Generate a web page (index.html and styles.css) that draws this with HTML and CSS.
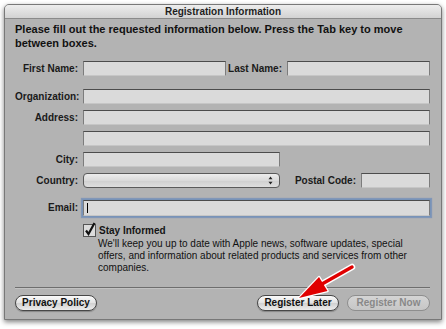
FILE: index.html
```html
<!DOCTYPE html>
<html lang="en">

<head>
  <meta charset="UTF-8">
  <title>Registration Information</title>
  <link rel="stylesheet" href="styles.css">
</head>

<body>
  <div class="window">
    <div class="titlebar">Registration Information</div>
    <div class="content">
      <p class="intro">Please fill out the requested information below. Press the Tab key to move<br>between boxes.</p>

      <div class="form">
        <div class="row">
          <span class="lbl">First Name:</span>
          <span class="field half"></span>
          <span class="lbl lbl-mid">Last Name:</span>
          <span class="field half"></span>
        </div>
        <div class="row row-org">
          <span class="lbl">Organization:</span>
          <span class="field full"></span>
        </div>
        <div class="row">
          <span class="lbl">Address:</span>
          <span class="field full"></span>
        </div>
        <div class="row">
          <span class="lbl"></span>
          <span class="field full"></span>
        </div>
        <div class="row">
          <span class="lbl">City:</span>
          <span class="field city"></span>
        </div>
        <div class="row">
          <span class="lbl">Country:</span>
          <span class="popup">
            <svg width="5" height="9" viewBox="0 0 5 9">
              <path d="M2.5 0.5 L4.5 3.2 L0.5 3.2 Z M2.5 8.5 L4.5 5.8 L0.5 5.8 Z" fill="#222"/>
            </svg>
          </span>
          <span class="lbl lbl-postal">Postal Code:</span>
          <span class="field postal"></span>
        </div>
        <div class="row row-email">
          <span class="lbl">Email:</span>
          <span class="field full focused"><span class="caret"></span></span>
        </div>
      </div>

      <div class="optin">
        <svg class="check" width="14" height="15" viewBox="0 0 14 15">
          <rect x="0.5" y="2.5" width="12" height="12" fill="#dcdcdc" stroke="#555"/>
          <path d="M3 8.5 L5.5 12 L11.5 1" fill="none" stroke="#111" stroke-width="2.2"/>
        </svg>
        <span class="optin-title">Stay Informed</span>
      </div>
      <p class="optin-text">We'll keep you up to date with Apple news, software updates, special<br>offers, and information about related products and services from other<br>companies.</p>

      <div class="separator"></div>

      <div class="buttons">
        <span class="btn">Privacy Policy</span>
        <div class="btn-group">
          <span class="btn">Register Later</span>
          <span class="btn btn-off">Register Now</span>
        </div>
      </div>
    </div>
  </div>

  <svg class="arrow" width="446" height="329" viewBox="0 0 446 329">
    <g stroke="#fff" stroke-width="2.5" stroke-linejoin="round">
      <path d="M352 267 L322 284" stroke-width="6.5" stroke-linecap="round"/>
      <path d="M299 298 L327.5 291 L319 277 Z" fill="#fff"/>
    </g>
    <path d="M352 267 L322 284" stroke="#e00000" stroke-width="3.5" stroke-linecap="round"/>
    <path d="M299 298 L327.5 291 L319 277 Z" fill="#e00000"/>
  </svg>
</body>

</html>
```

FILE: styles.css
```css
* {
  box-sizing: border-box;
}
body {
  margin: 0;
  width: 446px;
  height: 329px;
  position: relative;
  overflow: hidden;
  background: #fff;
  font-family: "Liberation Sans", Arial, sans-serif;
  color: #151515;
}
.window {
  margin: 4px 0 0 4px;
  width: 438px;
  height: 316px;
  background: #b3b3b3;
  border: 1px solid #787878;
  border-radius: 5px 5px 0 0;
  box-shadow: 0 2px 5px rgba(0, 0, 0, 0.5);
}
.titlebar {
  height: 14px;
  line-height: 13px;
  text-align: center;
  font-size: 10px;
  font-weight: bold;
  color: #1e1e1e;
  background: linear-gradient(#ededed, #d2d2d2);
  border-bottom: 1px solid #8a8a8a;
  border-radius: 4px 4px 0 0;
}
.content {
  padding: 3px 11px 0 10px;
}
.intro {
  margin: 0;
  font-size: 11px;
  line-height: 14px;
  font-weight: bold;
  color: #111;
}

/* form rows */
.form {
  margin-top: 11px;
  display: flex;
  flex-direction: column;
  gap: 6px;
}
.row {
  display: flex;
  align-items: center;
  height: 15px;
}
.row-org {
  margin-top: 7px;
}
.row-email {
  margin-top: 6px;
}
.lbl {
  flex: none;
  width: 68px;
  padding-right: 5px;
  text-align: right;
  font-size: 10px;
  font-weight: bold;
  color: #1a1a1a;
}
.lbl-mid {
  width: 61px;
}
.lbl-postal {
  width: 81px;
}
.field {
  flex: none;
  position: relative;
  height: 15px;
  background: #dadada;
  border: 1px solid #7c7c7c;
  border-top-color: #4c4c4c;
  border-bottom-color: #c6c6c6;
}
.half {
  width: 143px;
}
.full {
  width: 347px;
}
.city {
  width: 197px;
}
.postal {
  width: 69px;
}
.focused {
  height: 16px;
  box-shadow: 0 0 0 1px #7893b8, 0 0 1px 2px rgba(110, 140, 185, 0.7);
}
.caret {
  position: absolute;
  left: 3px;
  top: 2px;
  width: 1px;
  height: 10px;
  background: #000;
}
.popup {
  flex: none;
  width: 197px;
  height: 15px;
  display: flex;
  align-items: center;
  justify-content: flex-end;
  padding-right: 6px;
  background: linear-gradient(#ececec, #dadada 50%, #cfcfcf 51%, #dedede);
  border: 1px solid #5a5a5a;
  border-radius: 4px;
}

/* stay informed */
.optin {
  margin-top: 7px;
  padding-left: 68px;
  display: flex;
  align-items: flex-end;
  height: 15px;
}
.check {
  flex: none;
}
.optin-title {
  margin-left: 2px;
  font-size: 10px;
  font-weight: bold;
  line-height: 13px;
}
.optin-text {
  margin: 1px 0 0 83px;
  font-size: 10px;
  line-height: 12px;
  color: #111;
}
.separator {
  margin-top: 13px;
  border-top: 1px solid #6e6e6e;
  border-bottom: 1px solid #c2c2c2;
}

/* buttons */
.buttons {
  margin-top: 6px;
  display: flex;
  justify-content: space-between;
}
.btn-group {
  display: flex;
  gap: 8px;
}
.btn {
  width: 82px;
  height: 16px;
  line-height: 14px;
  text-align: center;
  font-size: 10px;
  font-weight: bold;
  color: #111;
  border: 1px solid #474747;
  border-radius: 8px;
  background: linear-gradient(#fafafa, #e2e2e2 50%, #d0d0d0 51%, #ececec);
  box-shadow: 0 1px 1px rgba(0, 0, 0, 0.25);
}
.btn-off {
  width: 83px;
  color: #888;
  border-color: #8e8e8e;
  background: linear-gradient(#d4d4d4, #c6c6c6);
  box-shadow: none;
}

.arrow {
  position: absolute;
  left: 0;
  top: 0;
  pointer-events: none;
}
```
